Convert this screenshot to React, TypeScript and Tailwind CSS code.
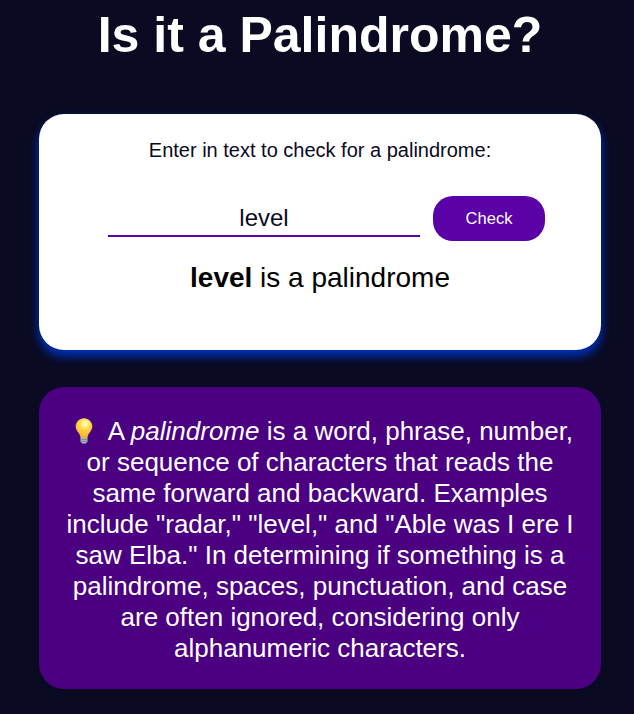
import React, { useState } from "react";

function Bulb() {
  return (
    <svg viewBox="0 0 18 26" className="mr-[9px] ml-[8px] inline-block h-[26px] w-[18px] align-[-4px]">
      <defs>
        <radialGradient id="glass" cx="55%" cy="30%" r="65%">
          <stop offset="0" stopColor="#fff3a0" />
          <stop offset=".35" stopColor="#fde057" />
          <stop offset="1" stopColor="#f7b82d" />
        </radialGradient>
      </defs>
      <path d="M9 .3C4.300.3.7 4 .7 8.500c0 2.600 1.500 4.500 2.800 6.200 1.200 1.600 1.900 3 2.100 5.300h6.800c.2-2.300.9-3.700 2.100-5.300 1.300-1.700 2.800-3.600 2.800-6.200C17.300 4 13.700.3 9 .3z" fill="url(#glass)" />
      <path d="M6.500 12l1.400 1L9 12l1.100 1 1.400-1-1.100 7.500H7.600z" fill="none" stroke="#f5a623" strokeOpacity=".65" strokeWidth=".8" />
      <ellipse cx="10.300" cy="5.500" rx="3.600" ry="3.200" fill="#fff9b8" opacity=".65" />
      <path d="M5.500 19.700h7v3.800L10.800 25.600H7.200l-1.700-2.100z" fill="#a9b5bd" />
      <path d="M5.500 21.600h7M6 23.500h6" stroke="#75818b" strokeWidth=".8" />
    </svg>
  );
}

export default function App() {
  const [text, setText] = useState("level");
  return (
    <main className="flex h-[714px] w-[634px] flex-col items-center overflow-hidden bg-[#0a0a23] pl-[6px] text-center font-['Liberation_Sans',Arial,sans-serif] text-[#0a0a23]">
      <h1 className="pt-1.5 text-[50px] leading-[58px] font-bold text-white">Is it a Palindrome?</h1>
      <section className="mt-[50px] flex h-[236px] w-[562px] shrink-0 flex-col items-center rounded-[25px] bg-white shadow-[0_6px_8px_1px_#002ead]">
        <label htmlFor="text" className="mt-6 text-[20px] leading-6">Enter in text to check for a palindrome:</label>
        <div className="mt-[34px] ml-[13px] flex gap-[13px]">
          <input id="text" value={text} onChange={(e) => setText(e.target.value)} className="h-[41px] w-[312px] border-b-2 border-[#5a01a7] pt-1 text-center text-[24px] text-[#0a0a23] outline-none" />
          <button className="h-[45px] w-[112px] rounded-[20px] bg-[#5a01a7] text-[16.500px] text-white">Check</button>
        </div>
        <p className="mt-[21px] text-[28px] leading-8 text-black"><b>level</b> is a palindrome</p>
      </section>
      <section className="mt-[37px] h-[302px] w-[562px] shrink-0 rounded-[25px] bg-[#4b0082] px-[25px] pt-[29px] text-[26px] leading-[31px] text-white">
        <Bulb />{" "}A <i>palindrome</i> is a word, phrase, number,<br />
        or sequence of characters that reads the<br />
        same forward and backward. Examples<br />
        include "radar," "level," and "Able was I ere I<br />
        saw Elba." In determining if something is a<br />
        palindrome, spaces, punctuation, and case<br />
        are often ignored, considering only<br />
        alphanumeric characters.
      </section>
    </main>
  );
}
